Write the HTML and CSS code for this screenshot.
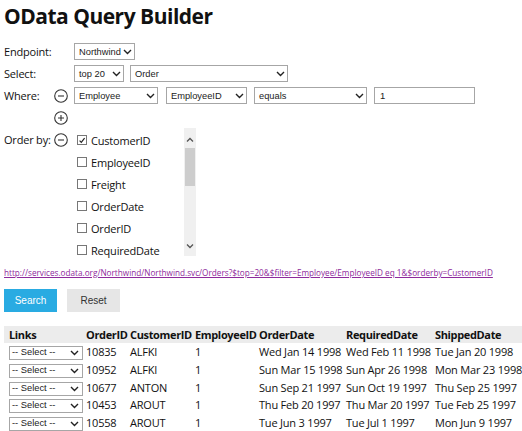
FILE: index.html
```html
<!DOCTYPE html>
<html>
<head>
<meta charset="utf-8">
<link rel="stylesheet" href="styles.css">
</head>
<body>
<h1 class="title">OData Query Builder</h1>
<div class="form">
  <div class="label">Endpoint:</div>
  <div class="icon"></div>
  <div class="controls">
    <span class="sel w60"><span class="sel-text">Northwind</span><svg class="chev" width="9" height="6" viewBox="0 0 9 6"><path d="M1 1 L4.5 4.5 L8 1" fill="none" stroke="#222" stroke-width="1.4"/></svg></span>
  </div>

  <div class="label">Select:</div>
  <div class="icon"></div>
  <div class="controls">
    <span class="sel w49"><span class="sel-text">top 20</span><svg class="chev" width="9" height="6" viewBox="0 0 9 6"><path d="M1 1 L4.5 4.5 L8 1" fill="none" stroke="#222" stroke-width="1.4"/></svg></span>
    <span class="sel w157"><span class="sel-text">Order</span><svg class="chev" width="9" height="6" viewBox="0 0 9 6"><path d="M1 1 L4.5 4.5 L8 1" fill="none" stroke="#222" stroke-width="1.4"/></svg></span>
  </div>

  <div class="label">Where:</div>
  <div class="icon"><svg width="14" height="14" viewBox="0 0 14 14"><circle cx="7" cy="7" r="6.3" fill="none" stroke="#333" stroke-width="1.1"/><path d="M4 7 H10" stroke="#333" stroke-width="1.1"/></svg></div>
  <div class="controls">
    <span class="sel w83"><span class="sel-text">Employee</span><svg class="chev" width="9" height="6" viewBox="0 0 9 6"><path d="M1 1 L4.5 4.5 L8 1" fill="none" stroke="#222" stroke-width="1.4"/></svg></span>
    <span class="sel w80 ml9"><span class="sel-text">EmployeeID</span><svg class="chev" width="9" height="6" viewBox="0 0 9 6"><path d="M1 1 L4.5 4.5 L8 1" fill="none" stroke="#222" stroke-width="1.4"/></svg></span>
    <span class="sel w112 ml7"><span class="sel-text">equals</span><svg class="chev" width="9" height="6" viewBox="0 0 9 6"><path d="M1 1 L4.5 4.5 L8 1" fill="none" stroke="#222" stroke-width="1.4"/></svg></span>
    <span class="inp w100 ml7">1</span>
  </div>

  <div class="label tight"></div>
  <div class="icon tight"><svg width="14" height="14" viewBox="0 0 14 14"><circle cx="7" cy="7" r="6.3" fill="none" stroke="#333" stroke-width="1.1"/><path d="M4 7 H10 M7 4 V10" stroke="#333" stroke-width="1.1"/></svg></div>
  <div class="controls tight"></div>

  <div class="label label-top">Order by:</div>
  <div class="icon icon-top"><svg width="14" height="14" viewBox="0 0 14 14"><circle cx="7" cy="7" r="6.3" fill="none" stroke="#333" stroke-width="1.1"/><path d="M4 7 H10" stroke="#333" stroke-width="1.1"/></svg></div>
  <div class="controls">
    <div class="listbox">
      <div class="items">
        <div class="item"><span class="cb"><svg width="9" height="9" viewBox="0 0 9 9"><path d="M1.8 4.6 L3.7 6.6 L7.4 1.8" fill="none" stroke="#222" stroke-width="1.3"/></svg></span>CustomerID</div>
        <div class="item"><span class="cb"></span>EmployeeID</div>
        <div class="item"><span class="cb"></span>Freight</div>
        <div class="item"><span class="cb"></span>OrderDate</div>
        <div class="item"><span class="cb"></span>OrderID</div>
        <div class="item"><span class="cb"></span>RequiredDate</div>
      </div>
      <div class="scrollbar">
        <svg class="arrow" width="12" height="12" viewBox="0 0 12 12"><path d="M3 7.5 L6 4.5 L9 7.5" fill="none" stroke="#555" stroke-width="1.3"/></svg>
        <div class="thumb"></div>
        <div class="track"></div>
        <svg class="arrow" width="12" height="12" viewBox="0 0 12 12"><path d="M3 4.5 L6 7.5 L9 4.5" fill="none" stroke="#555" stroke-width="1.3"/></svg>
      </div>
    </div>
  </div>
</div>

<a class="url" href="#">http://services.odata.org/Northwind/Northwind.svc/Orders?$top=20&amp;$filter=Employee/EmployeeID eq 1&amp;$orderby=CustomerID</a>

<div class="buttons">
  <span class="btn btn-primary">Search</span>
  <span class="btn btn-default">Reset</span>
</div>

<table class="grid">
  <colgroup>
    <col class="c1"><col class="c2"><col class="c3"><col class="c4"><col class="c5"><col class="c6"><col class="c7">
  </colgroup>
  <thead>
    <tr><th class="first">Links</th><th>OrderID</th><th>CustomerID</th><th>EmployeeID</th><th>OrderDate</th><th>RequiredDate</th><th>ShippedDate</th></tr>
  </thead>
  <tbody>
    <tr><td class="first"><span class="sel small"><span class="sel-text">-- Select --</span><svg class="chev" width="9" height="6" viewBox="0 0 9 6"><path d="M1 1 L4.5 4.5 L8 1" fill="none" stroke="#222" stroke-width="1.4"/></svg></span></td><td>10835</td><td>ALFKI</td><td>1</td><td>Wed Jan 14 1998</td><td>Wed Feb 11 1998</td><td>Tue Jan 20 1998</td></tr>
    <tr><td class="first"><span class="sel small"><span class="sel-text">-- Select --</span><svg class="chev" width="9" height="6" viewBox="0 0 9 6"><path d="M1 1 L4.5 4.5 L8 1" fill="none" stroke="#222" stroke-width="1.4"/></svg></span></td><td>10952</td><td>ALFKI</td><td>1</td><td>Sun Mar 15 1998</td><td>Sun Apr 26 1998</td><td>Mon Mar 23 1998</td></tr>
    <tr><td class="first"><span class="sel small"><span class="sel-text">-- Select --</span><svg class="chev" width="9" height="6" viewBox="0 0 9 6"><path d="M1 1 L4.5 4.5 L8 1" fill="none" stroke="#222" stroke-width="1.4"/></svg></span></td><td>10677</td><td>ANTON</td><td>1</td><td>Sun Sep 21 1997</td><td>Sun Oct 19 1997</td><td>Thu Sep 25 1997</td></tr>
    <tr><td class="first"><span class="sel small"><span class="sel-text">-- Select --</span><svg class="chev" width="9" height="6" viewBox="0 0 9 6"><path d="M1 1 L4.5 4.5 L8 1" fill="none" stroke="#222" stroke-width="1.4"/></svg></span></td><td>10453</td><td>AROUT</td><td>1</td><td>Thu Feb 20 1997</td><td>Thu Mar 20 1997</td><td>Tue Feb 25 1997</td></tr>
    <tr><td class="first"><span class="sel small"><span class="sel-text">-- Select --</span><svg class="chev" width="9" height="6" viewBox="0 0 9 6"><path d="M1 1 L4.5 4.5 L8 1" fill="none" stroke="#222" stroke-width="1.4"/></svg></span></td><td>10558</td><td>AROUT</td><td>1</td><td>Tue Jun 3 1997</td><td>Tue Jul 1 1997</td><td>Mon Jun 9 1997</td></tr>
  </tbody>
</table>
</body>
</html>
```

FILE: styles.css
```css
html, body {
  margin: 0;
  padding: 0;
  background: #fff;
  overflow: hidden;
}
body {
  font-family: "Open Sans", "Noto Sans", sans-serif;
  font-size: 11px;
  letter-spacing: -0.2px;
  color: #111;
  padding: 0 0 0 4px;
  width: 518px;
}
.title {
  font-size: 21px;
  font-weight: 700;
  margin: 3px 0 0 0;
  line-height: 27px;
  letter-spacing: -0.5px;
}
.form {
  display: grid;
  grid-template-columns: 44px 14px 1fr;
  column-gap: 6px;
  margin-top: 13px;
}
.label {
  height: 17px;
  line-height: 17px;
  margin-bottom: 5px;
  white-space: nowrap;
}
.icon {
  height: 17px;
  display: flex;
  align-items: center;
  margin-bottom: 5px;
}
.controls {
  display: flex;
  align-items: center;
  min-height: 17px;
  margin-bottom: 5px;
}
.label.tight, .icon.tight, .controls.tight { margin-bottom: 2px; }
.label-top { margin-top: 3px; }
.icon-top { margin-top: 3px; }
.sel {
  position: relative;
  display: inline-flex;
  align-items: center;
  box-sizing: border-box;
  height: 17px;
  border: 1px solid #a6a6a6;
  background: #fff;
  font-family: "Liberation Sans", Arial, sans-serif;
  font-size: 9.3px;
  letter-spacing: 0;
  color: #222;
  padding-left: 4px;
  white-space: nowrap;
}
.sel + .sel { margin-left: 6px; }
.sel .chev {
  position: absolute;
  right: 2px;
  top: 5px;
}
.w60 { width: 61px; }
.w49 { width: 50px; }
.w157 { width: 158px; }
.w83 { width: 84px; }
.w80 { width: 81px; }
.w112 { width: 113px; }
.w100 { width: 101px; }
.sel.ml9 { margin-left: 8px; }
.sel.ml7 { margin-left: 7px; }
.inp.ml7 { margin-left: 7px; }
.inp {
  display: inline-flex;
  align-items: center;
  box-sizing: border-box;
  height: 17px;
  border: 1px solid #a6a6a6;
  background: #fff;
  font-family: "Liberation Sans", Arial, sans-serif;
  font-size: 9.5px;
  letter-spacing: 0;
  color: #222;
  padding-left: 5px;
}
.listbox {
  display: flex;
  width: 122px;
  height: 128px;
}
.items {
  flex: 1;
  padding-top: 1px;
}
.item {
  display: flex;
  align-items: center;
  height: 22px;
  padding-left: 3px;
}
.cb {
  box-sizing: border-box;
  width: 10px;
  height: 10px;
  border: 1px solid #777;
  background: #fff;
  margin-right: 4px;
  display: inline-flex;
  align-items: center;
  justify-content: center;
}
.cb svg { display: block; }
.scrollbar {
  width: 12px;
  background: #f0f0f0;
  display: flex;
  flex-direction: column;
}
.arrow { display: block; margin-top: 6px; }
.scrollbar .arrow:last-child { margin-top: 0; margin-bottom: 4px; }
.thumb {
  height: 38px;
  margin: 2px 1px 0 1px;
  background: #cdcdcd;
}
.track { flex: 1; }
.url {
  display: block;
  margin-top: 5px;
  font-size: 8.2px;
  letter-spacing: 0;
  color: #8e2a9c;
  text-decoration: underline;
  white-space: nowrap;
  line-height: 14px;
}
.buttons {
  display: flex;
  gap: 10px;
  margin-top: 9px;
}
.btn {
  display: inline-flex;
  align-items: center;
  justify-content: center;
  width: 53px;
  height: 23px;
  font-family: "Liberation Sans", Arial, sans-serif;
  font-size: 10px;
  letter-spacing: 0;
}
.btn-primary { background: #29abe2; color: #fff; }
.btn-default { background: #e6e6e6; color: #333; }
.grid {
  margin-top: 14px;
  border-collapse: collapse;
  table-layout: fixed;
  width: 518px;
  white-space: nowrap;
}
.c1 { width: 82px; }
.c2 { width: 44px; }
.c3 { width: 65px; }
.c4 { width: 64px; }
.c5 { width: 87px; }
.c6 { width: 89px; }
.c7 { width: 87px; }
.grid th {
  background: #ececec;
  text-align: left;
  font-weight: 700;
  letter-spacing: -0.35px;
  height: 17px;
  padding: 0;
  line-height: 17px;
}
.grid td {
  padding: 0;
  height: 17.75px;
  line-height: 17.75px;
  overflow: visible;
}
.grid .first { padding-left: 5px; }
.sel.small {
  width: 74px;
  height: 14px;
  vertical-align: middle;
  padding-left: 2px;
}
.sel.small .chev { top: 3px; right: 3px; }
```
